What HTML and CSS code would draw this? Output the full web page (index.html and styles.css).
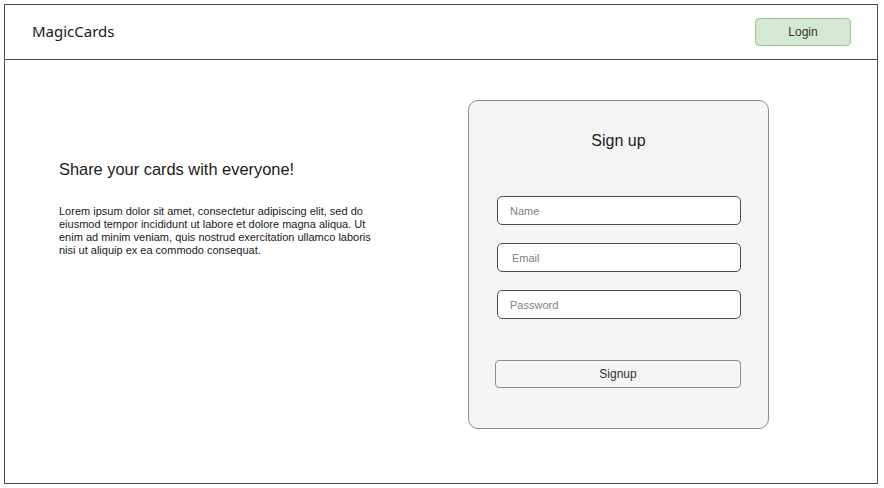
FILE: index.html
```html
<!DOCTYPE html>
<html>
<head>
<meta charset="utf-8">
<link rel="stylesheet" href="styles.css">
</head>
<body>
<div class="frame">
  <header class="header">
    <div class="brand">MagicCards</div>
    <button class="login">Login</button>
  </header>
  <main class="main">
    <section class="intro">
      <h1 class="intro-title">Share your cards with everyone!</h1>
      <p class="intro-text">Lorem ipsum dolor sit amet, consectetur adipiscing elit, sed do eiusmod tempor incididunt ut labore et dolore magna aliqua. Ut enim ad minim veniam, quis nostrud exercitation ullamco laboris nisi ut aliquip ex ea commodo consequat.</p>
    </section>
    <section class="card">
      <h2 class="card-title">Sign up</h2>
      <div class="fields">
        <input class="field" type="text" placeholder="Name">
        <input class="field field-email" type="text" placeholder="Email">
        <input class="field" type="password" placeholder="Password">
      </div>
      <button class="signup">Signup</button>
    </section>
  </main>
</div>
</body>
</html>
```
FILE: styles.css
```css
* { box-sizing: border-box; }
html, body { margin: 0; padding: 0; background: #fff; }
body { font-family: "Liberation Sans", Arial, sans-serif; color: #1a1a1a; }

.frame {
  margin: 4px 6px 4px 4px;
  height: 480px;
  border: 1px solid #4d4d4d;
  display: flex;
  flex-direction: column;
}

.header {
  height: 55px;
  border-bottom: 1px solid #4d4d4d;
  display: flex;
  align-items: center;
  justify-content: space-between;
  padding: 0 26px 0 27px;
  flex-shrink: 0;
}
.brand {
  font-family: "Noto Sans", "Open Sans", sans-serif;
  font-size: 15px;
  color: #1a1a1a;
  margin-top: -3px;
}
.login {
  width: 96px;
  height: 28px;
  background: #d5e8d4;
  border: 1px solid #9cc38a;
  border-radius: 4px;
  font-family: "Liberation Sans", Arial, sans-serif;
  font-size: 12px;
  color: #333;
  padding: 0;
  margin-top: -1px;
}

.main {
  flex: 1;
  display: flex;
  align-items: flex-start;
  padding: 40px 0 0 54px;
}

.intro {
  width: 409px;
  padding-top: 60px;
}
.intro-title {
  margin: 0;
  font-size: 16.4px;
  font-weight: normal;
  line-height: 18px;
  color: #1a1a1a;
}
.intro-text {
  margin: 27px 0 0 0;
  width: 322px;
  font-size: 11px;
  line-height: 13px;
  color: #1a1a1a;
}

.card {
  width: 301px;
  height: 329px;
  background: #f5f5f5;
  border: 1px solid #8c8c8c;
  border-radius: 10px;
  padding: 31px 0 0 26px;
}
.card-title {
  margin: 0 0 0 -26px;
  text-align: center;
  font-size: 16px;
  font-weight: normal;
  line-height: 18px;
  color: #1a1a1a;
}
.fields {
  margin-top: 46px;
  padding-left: 2px;
  display: flex;
  flex-direction: column;
  gap: 18px;
}
.field {
  display: block;
  width: 244px;
  height: 29px;
  border: 1px solid #4d4d4d;
  border-radius: 5px;
  background: #fff;
  padding: 0 12px;
  font-family: "Liberation Sans", Arial, sans-serif;
  font-size: 11px;
  color: #333;
  outline: none;
}
.field-email { padding-left: 14px; }
.field::placeholder { color: #808080; }

.signup {
  display: block;
  margin-top: 41px;
  width: 246px;
  height: 28px;
  background: #f5f5f5;
  border: 1px solid #8c8c8c;
  border-radius: 4px;
  font-family: "Liberation Sans", Arial, sans-serif;
  font-size: 12px;
  color: #333;
  padding: 0;
}
```
